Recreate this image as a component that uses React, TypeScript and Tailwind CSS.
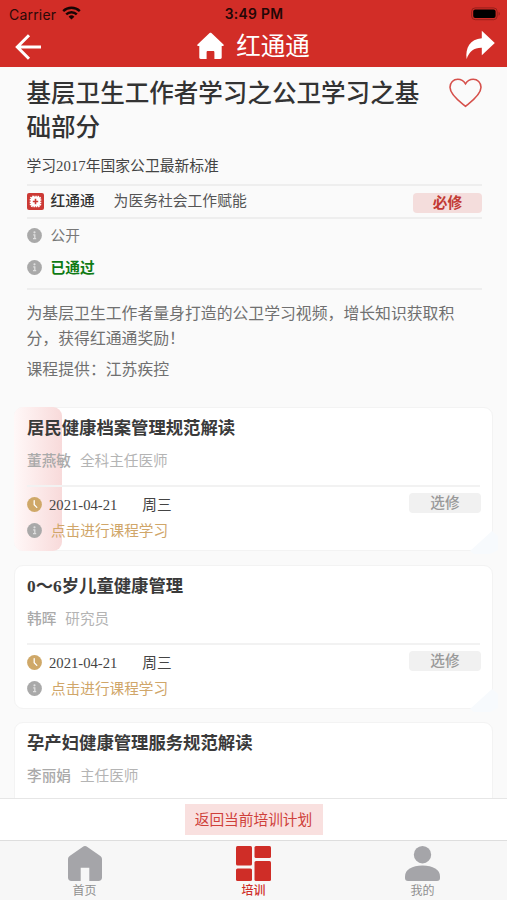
type Lesson = {
  title: string;
  teacher: string;
  role: string;
  date?: string;
  weekday?: string;
  active?: boolean;
};

const lessons: Lesson[] = [
  { title: '居民健康档案管理规范解读', teacher: '董燕敏', role: '全科主任医师', date: '2021-04-21', weekday: '周三', active: true },
  { title: '0～6岁儿童健康管理', teacher: '韩晖', role: '研究员', date: '2021-04-21', weekday: '周三' },
  { title: '孕产妇健康管理服务规范解读', teacher: '李丽娟', role: '主任医师' },
];

function InfoIcon() {
  return (
    <svg className="mb-[3px] size-[15px] shrink-0" viewBox="0 0 15 15">
      <circle cx="7.5" cy="7.5" r="7.4" fill="#a9a9a9" />
      <circle cx="7.5" cy="4.3" r="1.1" fill="#dedede" />
      <path d="M6.2 6.9h1.6v3.5M6 10.7h3.2" stroke="#dedede" strokeWidth="1.3" fill="none" />
    </svg>
  );
}

function ClockIcon() {
  return (
    <svg className="mb-[3px] size-[15px] shrink-0" viewBox="0 0 15 15">
      <circle cx="7.5" cy="7.5" r="7.4" fill="#cfa868" />
      <path d="M7.2 3.6v4.2l2.6 2.6" stroke="#fff" strokeWidth="1.3" fill="none" strokeLinecap="round" />
    </svg>
  );
}

function StatusBar() {
  return (
    <div className="grid h-[28px] grid-cols-3 items-center pl-[9px] pr-[6px] font-[Inter,'Liberation_Sans',sans-serif] text-[#2a0908]">
      <div className="flex items-center gap-[6px]">
        <span className="text-[14px] tracking-[0.2px]">Carrier</span>
        <svg className="mb-[2px] h-[14px] w-[19px]" viewBox="0 0 19 14" fill="none" stroke="#180504" strokeWidth="2.4">
          <path d="M1.2 5.2a11.8 11.8 0 0 1 16.6 0" />
          <path d="M4.2 8.4a7.5 7.5 0 0 1 10.6 0" />
          <path d="M9.5 13.6 6.6 10.7a4.1 4.1 0 0 1 5.8 0Z" fill="#180504" stroke="none" />
        </svg>
      </div>
      <div className="-ml-[2px] whitespace-nowrap text-center text-[13.8px] font-semibold tracking-[0.3px] text-[#220706]">3:49 PM</div>
      <svg className="mb-px h-[14px] w-[30px] justify-self-end" viewBox="0 0 30 14">
        <rect x="0.6" y="0.9" width="25.6" height="11.8" rx="3.6" fill="none" stroke="#96201b" strokeWidth="1" />
        <rect x="2.2" y="2.6" width="22.4" height="8.4" rx="2" fill="#000" />
        <path d="M27.6 4.8c1.6.6 1.6 3.4 0 4Z" fill="#96201b" />
      </svg>
    </div>
  );
}

function Header() {
  return (
    <header className="h-[67px] shrink-0 bg-[#d22d27]">
      <StatusBar />
      <div className="grid h-[37px] grid-cols-[1fr_auto_1fr] items-center px-[12px]">
        <svg className="ml-[3px] h-[26px] w-[27px]" viewBox="0 0 27 26" fill="none" stroke="#fff" strokeWidth="3">
          <path d="M26 13H2.5M14 1.2 2.3 13 14 24.8" />
        </svg>
        <div className="flex items-center gap-[12px]">
          <svg className="mb-[2px] h-[28px] w-[27px]" viewBox="0 0 27 28" fill="#fff">
            <path d="M12.6 1.1c.6-.5 1.2-.5 1.8 0l12.1 11.5c.6.7.3 1.5-.6 1.5h-1.2v11.5c0 .9-.5 1.4-1.4 1.4h-5.9v-6.6c0-.9-.4-1.3-1.3-1.3h-5.2c-.9 0-1.3.4-1.3 1.3V27H3.7c-.9 0-1.4-.5-1.4-1.4V14.1H1.1c-.9 0-1.2-.8-.6-1.5Z" />
          </svg>
          <span className="text-[24.5px] leading-[36px] text-white">红通通</span>
        </div>
        <svg className="mb-[3px] h-[30px] w-[30px] justify-self-end" viewBox="0 0 30 30" fill="#fff">
          <path d="M16.8.8 29.8 13 16.8 25.2v-7.4C9 17.6 4.6 21.2 1.6 29 .2 18 5 9 16.8 8.3Z" />
        </svg>
      </div>
    </header>
  );
}

function CourseInfo() {
  return (
    <section className="pl-[26.5px] pr-[25px] text-[14.7px]">
      <div className="flex justify-between pt-[10px]">
        <h1 className="text-[24.55px] font-medium leading-[34px] text-[#333]">
          基层卫生工作者学习之公卫学习之基
          <br />
          础部分
        </h1>
        <svg className="mt-[1px] h-[30px] w-[33px] shrink-0" viewBox="0 0 33 30" fill="none" stroke="#d6504b" strokeWidth="1.6">
          <path d="M16.5 28.3C13 25.3 1 17.5 1 9.3 1 4.5 4.5 1.2 8.8 1.2c3.3 0 6 1.8 7.7 4.6 1.7-2.8 4.4-4.6 7.7-4.6 4.3 0 7.8 3.3 7.8 8.1 0 8.2-12 16-15.5 19Z" />
        </svg>
      </div>
      <p className="mt-[10px] h-[29px] text-[14.8px] leading-[22px] text-[#444]">学习2017年国家公卫最新标准</p>
      <div className="flex h-[35px] items-center border-y-2 border-[#eeeeee]">
        <svg className="mb-px size-[17px] shrink-0" viewBox="0 0 17 17">
          <rect width="17" height="17" rx="2" fill="#cc3a35" />
          <rect x="3.8" y="3.8" width="9.4" height="9.4" rx="2" fill="#fff" />
          <rect x="3.5" y="3.5" width="10" height="10" rx="2.5" fill="none" stroke="#fff" strokeWidth="1.6" strokeDasharray="1.5 .8" />
          <path d="M8.5 5.8v5.4M5.8 8.5h5.4" stroke="#cc3a35" strokeWidth="1.6" />
        </svg>
        <span className="ml-[7px] font-medium text-[#333]">红通通</span>
        <span className="ml-[19px] text-[14.8px] text-[#555]">为医务社会工作赋能</span>
        <span className="mt-[2px] ml-auto h-[20px] w-[69px] rounded-[4px] bg-[#f4dddc] text-center font-bold leading-[20px] text-[#c23a34]">必修</span>
      </div>
      <div className="flex h-[35px] items-center gap-[9px] text-[#777]">
        <InfoIcon />
        <span>公开</span>
      </div>
      <div className="flex h-[36px] items-center gap-[9px] border-b-2 border-[#eeeeee] pb-[5px]">
        <InfoIcon />
        <span className="font-bold text-[#0f7a14]">已通过</span>
      </div>
      <p className="mt-[11px] text-[15.85px] leading-[25px] text-[#707070]">
        为基层卫生工作者量身打造的公卫学习视频，增长知识获取积
        <br />
        分，获得红通通奖励！
      </p>
      <p className="mt-[6px] text-[15.85px] leading-[25px] text-[#707070]">课程提供：江苏疾控</p>
    </section>
  );
}

function LessonCard({ lesson }: { lesson: Lesson }) {
  return (
    <article className="relative h-[144px] shrink-0 rounded-[9px] border border-[#f3f3f3] bg-white px-[12px] text-[14.65px]">
      {lesson.active && (
        <div className="absolute -top-px -left-px h-[144px] w-[48px] rounded-[9px] bg-linear-to-r from-[#fff8f8] to-[#f8dada]" />
      )}
      <svg className="absolute -right-[6px] -bottom-[4px] h-[24px] w-[28px]" viewBox="0 0 28 24">
        <path d="M0 21 22 1l6 5v14l-8 4H4Z" fill="#f7fafd" />
      </svg>
      <div className="relative">
        <h2 className="h-[43px] pt-[9px] text-[17.35px] font-bold leading-[24px] text-[#3a3a3a]">{lesson.title}</h2>
        <div className="flex h-[36px] gap-[9px] border-b-2 border-[#f2f2f2] leading-[20px] text-[#b4b4b4]">
          <span className="font-medium text-[#aaa]">{lesson.teacher}</span>
          <span>{lesson.role}</span>
        </div>
        {lesson.date && (
          <>
            <div className="flex h-[38px] items-center text-[#444]">
              <ClockIcon />
              <span className="ml-[7px]">{lesson.date}</span>
              <span className="ml-[25px]">{lesson.weekday}</span>
              <span className="-mr-px mb-[6px] ml-auto h-[20px] w-[72px] rounded-[4px] bg-[#f1f1f1] text-center font-medium leading-[20px] text-[#999]">选修</span>
            </div>
            <div className="-mt-[3px] flex h-[20px] items-center gap-[9px]">
              <InfoIcon />
              <span className="text-[#d0a669]">点击进行课程学习</span>
            </div>
          </>
        )}
      </div>
    </article>
  );
}

function TabBar() {
  return (
    <nav className="grid h-[60px] shrink-0 grid-cols-3 border-t border-[#dedede] bg-[#f7f7f7] text-center text-[12px] leading-[16px] text-[#8f8f8f]">
      <div className="flex flex-col items-center pt-[5px]">
        <svg className="h-[35px] w-[34px]" viewBox="0 0 34 35" fill="#a5a5a9">
          <path d="M14.6.9c1.5-1.1 3.3-1.1 4.8 0L32 9.8c1.3 1 2 2 2 3.6v18.2c0 2-1.4 3.4-3.4 3.4h-9.3V21.7h-8.6V35H3.4C1.4 35 0 33.6 0 31.6V13.4c0-1.6.7-2.6 2-3.6Z" />
        </svg>
        <span className="mt-[2px]">首页</span>
      </div>
      <div className="flex flex-col items-center pt-[5px] text-[#cf2d27]">
        <svg className="h-[35px] w-[35px]" viewBox="0 0 35 35" fill="#cf2d27">
          <rect width="16" height="19.5" rx="1.5" />
          <rect x="18.5" width="16.5" height="12" rx="1.5" />
          <rect y="22.5" width="16" height="12.5" rx="1.5" />
          <rect x="18.5" y="15" width="16.5" height="20" rx="1.5" />
        </svg>
        <span className="mt-[2px] font-medium">培训</span>
      </div>
      <div className="flex flex-col items-center pt-[5px]">
        <svg className="h-[35px] w-[35px]" viewBox="0 0 35 35" fill="#a5a5a9">
          <circle cx="17.5" cy="8.7" r="8.7" />
          <path d="M0 30.5C0 23.5 7 19.5 17.5 19.5S35 23.5 35 30.5V32c0 2-1 3-3 3H3c-2 0-3-1-3-3Z" />
        </svg>
        <span className="mt-[2px]">我的</span>
      </div>
    </nav>
  );
}

export default function App() {
  return (
    <div className="flex h-[900px] w-[507px] flex-col overflow-hidden bg-[#fafafa] font-['Liberation_Serif','Noto_Sans_CJK_SC',sans-serif]">
      <Header />
      <main className="min-h-0 flex-1 overflow-hidden">
        <CourseInfo />
        <div className="mt-[25px] flex flex-col gap-[13.5px] px-[14px]">
          {lessons.map((lesson) => (
            <LessonCard key={lesson.title} lesson={lesson} />
          ))}
        </div>
      </main>
      <div className="flex h-[42px] shrink-0 justify-center border-t border-[#e6e6e6] bg-white pt-[5px]">
        <button className="h-[31px] w-[138px] bg-[#f9e0df] text-[14.7px] leading-[30px] text-[#cf403a]">返回当前培训计划</button>
      </div>
      <TabBar />
    </div>
  );
}
